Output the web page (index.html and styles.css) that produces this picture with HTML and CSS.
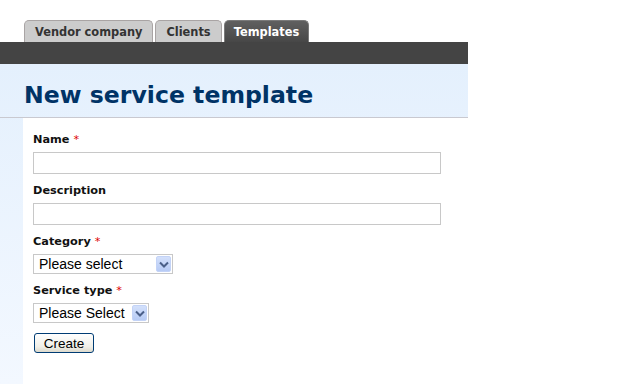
FILE: index.html
```html
<!DOCTYPE html>
<html>
<head>
<meta charset="utf-8">
<link rel="stylesheet" href="styles.css">
</head>
<body>
<div class="page">
  <div class="tabs">
    <a class="tab">Vendor company</a>
    <a class="tab">Clients</a>
    <a class="tab active">Templates</a>
  </div>
  <div class="bar"></div>
  <div class="main">
    <div class="header"><h1>New service template</h1></div>
    <form class="form">
      <div class="field">
        <label class="label">Name <span class="req">*</span></label>
        <div class="input"></div>
      </div>
      <div class="field">
        <label class="label">Description</label>
        <div class="input"></div>
      </div>
      <div class="field">
        <label class="label">Category <span class="req">*</span></label>
        <div class="select select-wide">
          <span class="select-text">Please select</span>
          <span class="arrow"><svg width="10" height="7" viewBox="0 0 10 7"><path d="M1 1.5 L5 5.5 L9 1.5" fill="none" stroke="#4a5f88" stroke-width="2"/></svg></span>
        </div>
      </div>
      <div class="field">
        <label class="label">Service type <span class="req">*</span></label>
        <div class="select select-narrow">
          <span class="select-text">Please Select</span>
          <span class="arrow"><svg width="10" height="7" viewBox="0 0 10 7"><path d="M1 1.5 L5 5.5 L9 1.5" fill="none" stroke="#4a5f88" stroke-width="2"/></svg></span>
        </div>
      </div>
      <button type="button" class="btn">Create</button>
    </form>
  </div>
</div>
</body>
</html>
```

FILE: styles.css
```css
html, body {
  margin: 0;
  padding: 0;
  background: #ffffff;
}
body {
  font-family: "DejaVu Sans", Verdana, sans-serif;
  height: 384px;
  overflow: hidden;
}
.page {
  width: 468px;
  height: 384px;
  display: flex;
  flex-direction: column;
}
.tabs {
  display: flex;
  align-items: flex-end;
  gap: 2px;
  padding: 20px 0 0 24px;
}
.tab {
  display: block;
  font-size: 11.4px;
  font-weight: bold;
  line-height: 14px;
  color: #333333;
  background: #cccccc;
  border: 1px solid #a9a4a4;
  border-bottom: none;
  border-radius: 5px 5px 0 0;
  padding: 4px 10px 3px 10px;
}
.tab.active {
  color: #ffffff;
  background: linear-gradient(#606060, #474747);
  border-color: #7a7a7a;
  padding: 4px 9px 3px 9px;
}
.bar {
  height: 22px;
  background: #444444;
}
.main {
  flex: 1;
  padding-left: 23px;
  background: linear-gradient(#e4f0fd, #f3f8ff);
  display: flex;
  flex-direction: column;
}
.header {
  height: 53px;
  border-bottom: 1px solid #c9c9d0;
  margin-left: -23px;
  padding-left: 24px;
  box-sizing: content-box;
}
.header h1 {
  margin: 0;
  padding-top: 17px;
  font-size: 23.6px;
  line-height: 29px;
  font-weight: bold;
  color: #003366;
}
.form {
  flex: 1;
  background: #ffffff;
  padding: 15px 0 0 10px;
  margin: 0;
}
.field {
  margin-bottom: 10px;
}
.label {
  display: block;
  font-size: 11.3px;
  font-weight: bold;
  line-height: 14px;
  color: #111111;
  margin-bottom: 5px;
}
.req {
  color: #dd0000;
  font-weight: normal;
}
.input {
  width: 406px;
  height: 20px;
  border: 1px solid #c8c8c8;
  background: #ffffff;
}
.select {
  height: 18px;
  border: 1px solid #c8c8c8;
  display: flex;
  align-items: center;
  justify-content: space-between;
  padding: 0 1px 0 5px;
  font-family: "Liberation Sans", Arial, sans-serif;
  font-size: 14px;
  color: #000000;
}
.select-wide { width: 132px; }
.select-narrow { width: 108px; }
.select-text {
  line-height: 18px;
}
.arrow {
  width: 15px;
  height: 16px;
  background: linear-gradient(#d3e0fb, #b7cbf5);
  border: 1px solid #c3d3f7;
  box-sizing: border-box;
  border-radius: 2px;
  display: flex;
  align-items: center;
  justify-content: center;
}
.btn {
  display: block;
  width: 60px;
  height: 20px;
  margin: 0 0 0 1px;
  padding: 0;
  font-family: "Liberation Sans", Arial, sans-serif;
  font-size: 13.5px;
  color: #000000;
  border: 1px solid #003c74;
  border-radius: 3px;
  background: linear-gradient(#ffffff, #f0efe8 70%, #dcd9cc);
}
```
